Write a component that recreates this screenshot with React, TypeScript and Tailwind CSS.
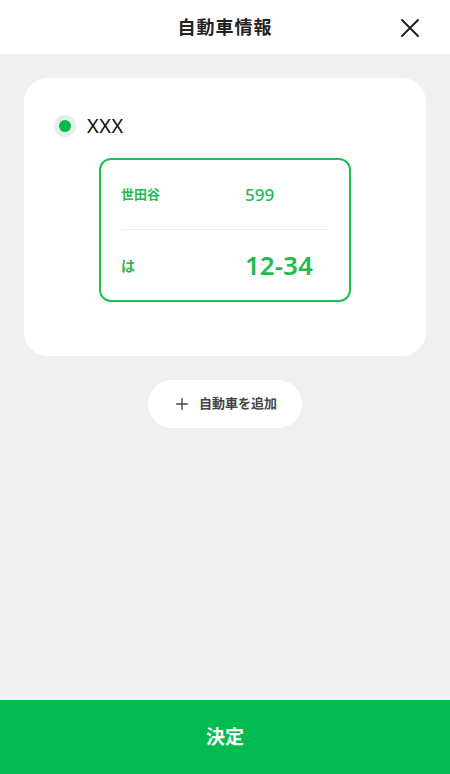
import { Plus } from 'lucide-react';

export default function App() {
  return (
    <div className="w-[450px] h-[774px] flex flex-col bg-[#f0f0f0] font-['Noto_Sans','Noto_Sans_CJK_JP',sans-serif]">
      {/* header */}
      <header className="h-[54px] bg-white flex items-center justify-center relative">
        <h1 className="text-[18px] font-bold text-[#222] tracking-[1px]">自動車情報</h1>
        <button className="absolute right-[30px] top-[18px] text-[#222]">
          <svg width="20" height="20" viewBox="0 0 20 20" fill="none" stroke="currentColor" strokeWidth="2" strokeLinecap="round">
            <path d="M2 2L18 18M18 2L2 18" />
          </svg>
        </button>
      </header>

      <main className="flex-1 flex flex-col items-center px-6 pt-6">
        {/* car card */}
        <section className="w-full h-[278px] bg-white rounded-[24px] pt-[33px] px-[30px]">
          <div className="flex items-center gap-[11px]">
            <div className="w-[22px] h-[22px] rounded-full bg-[#e4efe7] flex items-center justify-center">
              <div className="w-[12px] h-[12px] rounded-full bg-[#06b94c]" />
            </div>
            <span className="text-[20px] text-[#111] tracking-[0.5px]">XXX</span>
          </div>

          <div className="ml-[45px] mt-[17px] w-[252px] h-[144px] border-2 border-[#1ec154] rounded-[12px] px-[20px] text-[#1ebb50]">
            <div className="h-[70px] flex items-center border-b border-[#ececec]">
              <span className="w-[124px] text-[13px] font-bold pt-[1px]">世田谷</span>
              <span className="text-[17px] font-medium">599</span>
            </div>
            <div className="h-[70px] flex items-center">
              <span className="w-[124px] text-[14px] font-bold">は</span>
              <span className="text-[26px] font-semibold">12-34</span>
            </div>
          </div>
        </section>

        <button className="mt-[24px] h-[48px] px-[25px] rounded-full bg-white flex items-center gap-[6px] text-[#444]">
          <Plus size={18} strokeWidth={1.8} />
          <span className="text-[13px] font-bold pl-[2px]">自動車を追加</span>
        </button>
      </main>

      <button className="h-[74px] bg-[#03bb50] text-white text-[19px] font-bold flex items-center justify-center">
        決定
      </button>
    </div>
  );
}
